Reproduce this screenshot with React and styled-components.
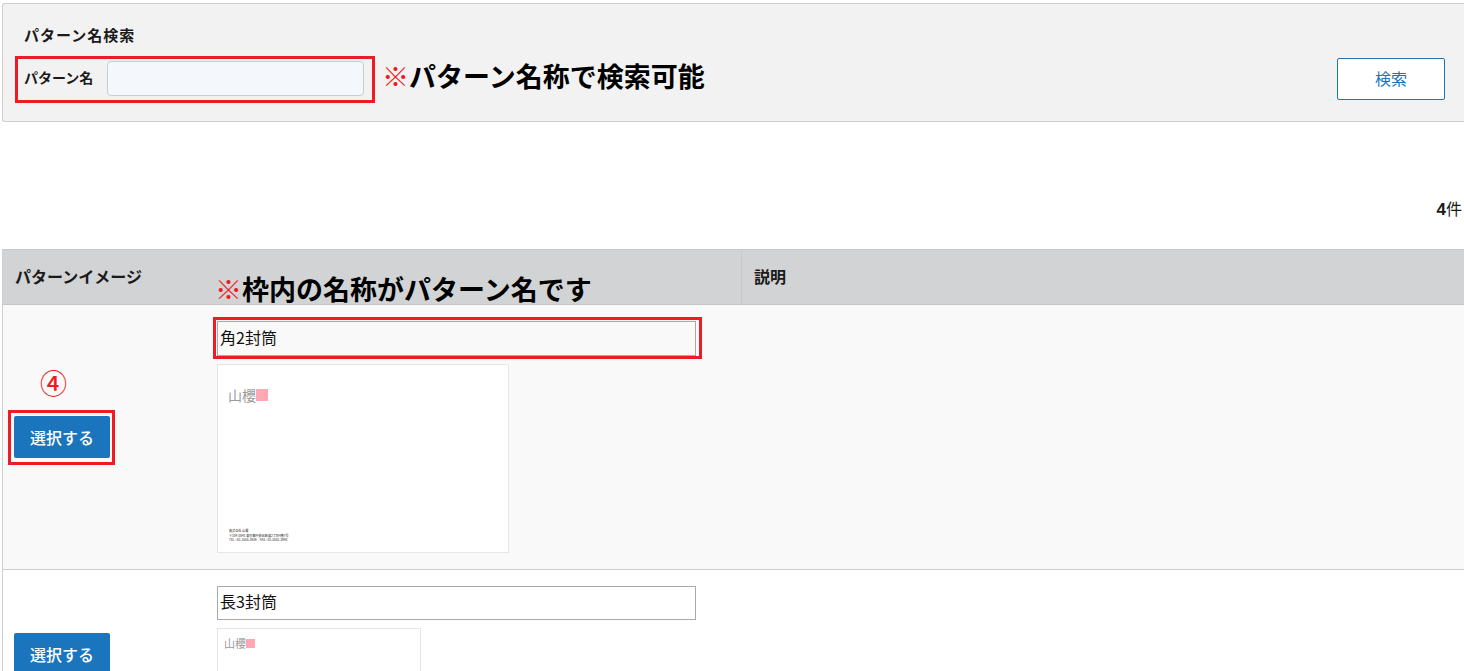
import styled, { createGlobalStyle } from "styled-components";

const GlobalStyle = createGlobalStyle`
  html, body {
    margin: 0;
    padding: 0;
    overflow: hidden;
    background: #fff;
  }

  body {
    font-family: "Noto Sans CJK JP", "Liberation Sans", sans-serif;
    color: #1a1a1a;
  }
`;

const Page = styled.div`
  box-sizing: border-box;
  width: 1464px;
  height: 671px;
  padding: 3px 0 0 2px;
  overflow: hidden;
`;

const SearchPanel = styled.section`
  position: relative;
  box-sizing: border-box;
  height: 119px;
  padding: 20px 19px 0 21px;
  background: #f2f2f2;
  border: 1px solid #cfcfcf;
  border-right: none;
  border-radius: 3px 0 0 3px;
`;

const PanelTitle = styled.h2`
  margin: 0;
  font-size: 15px;
  line-height: 22px;
  font-weight: 700;
  letter-spacing: 1px;
`;

const SearchRow = styled.div`
  display: flex;
  align-items: center;
  margin-top: 15px;
  height: 35px;
`;

const FieldLabel = styled.label`
  width: 83px;
  margin-bottom: 3px;
  font-size: 14px;
  font-weight: 700;
`;

const SearchInput = styled.input`
  box-sizing: border-box;
  width: 257px;
  height: 35px;
  background: #f4f8fc;
  border: 1px solid #c8cdd2;
  border-radius: 4px;
  outline: none;
`;

const SearchButton = styled.button`
  box-sizing: border-box;
  width: 108px;
  height: 42px;
  margin-left: auto;
  padding: 0 0 2px;
  background: #fff;
  border: 1px solid #1b75bc;
  border-radius: 2px;
  color: #1b75bc;
  font-family: inherit;
  font-size: 16px;
`;

const RedFrame = styled.span`
  position: absolute;
  box-sizing: border-box;
  top: ${(p) => p.$top}px;
  left: ${(p) => p.$left}px;
  width: ${(p) => p.$width}px;
  height: ${(p) => p.$height}px;
  border: 3px solid #ed1c24;
  pointer-events: none;
`;

const Note = styled.p`
  position: absolute;
  top: ${(p) => p.$top}px;
  left: ${(p) => p.$left}px;
  margin: 0;
  font-size: 27px;
  line-height: 36px;
  font-weight: 700;
  color: #000;
  white-space: nowrap;

  span {
    color: #ed1c24;
    font-weight: 400;
  }
`;

const Count = styled.div`
  margin: 75px 2px 0 0;
  height: 22px;
  text-align: right;
  font-size: 16px;
  line-height: 22px;

  b {
    font-family: "Liberation Sans", sans-serif;
    font-size: 17px;
  }
`;

const Table = styled.div`
  position: relative;
  margin-top: 30px;
  border-left: 1px solid #cfcfcf;
`;

const HeaderRow = styled.div`
  display: grid;
  grid-template-columns: 738px 1fr;
  height: 56px;
  background: #d1d3d4;
  border-top: 1px solid #c4c6c8;
  box-sizing: border-box;
  border-bottom: 1px solid #c4c6c8;
`;

const HeaderCell = styled.div`
  padding: 15px 12px 0;
  font-size: 16px;
  line-height: 22px;
  font-weight: 700;
  box-sizing: border-box;
  border-left: ${(p) => (p.$divided ? "1px solid #c6c8ca" : "none")};
`;

const Row = styled.div`
  display: grid;
  grid-template-columns: 214px 1fr;
  box-sizing: border-box;
  padding: 16px 0;
  background: ${(p) => (p.$shaded ? "#f9f9f9" : "#fff")};
  border-bottom: 1px solid #cfcfcf;
`;

const ActionCell = styled.div`
  position: relative;
  display: flex;
  align-items: center;
  padding-left: 11px;
`;

const SelectButton = styled.button`
  width: 96px;
  height: 42px;
  padding: 0;
  background: #1b75bc;
  border: none;
  border-radius: 2px;
  color: #fff;
  font-family: inherit;
  font-size: 16px;
  font-weight: 500;
`;

const StepMark = styled.span`
  position: absolute;
  top: 46px;
  left: 37px;
  color: #ed1c24;
  font-size: 27px;
  font-weight: 500;
  line-height: 32px;
`;

const PatternCell = styled.div`
  display: flex;
  flex-direction: column;
  align-items: flex-start;
  gap: 8px;
`;

const NameWrap = styled.div`
  position: relative;
`;

const NameInput = styled.input`
  display: block;
  box-sizing: border-box;
  width: 479px;
  height: ${(p) => p.$h}px;
  padding: 0 2px 4px;
  background: transparent;
  border: 1px solid #a9a9a9;
  outline: none;
  color: #111;
  font-family: "Noto Sans CJK JP", "Liberation Sans", sans-serif;
  font-size: 16px;
`;

const Thumb = styled.div`
  position: relative;
  box-sizing: border-box;
  width: ${(p) => p.$w}px;
  height: ${(p) => p.$h}px;
  padding: ${(p) => p.$pad};
  background: #fff;
  border: 1px solid #e6e6e6;
`;

const Logo = styled.div`
  display: flex;
  align-items: center;
  color: #9a9a9a;
  font-size: ${(p) => p.$size}px;
  line-height: ${(p) => p.$size + 2}px;

  i {
    display: block;
    width: ${(p) => p.$size - 2}px;
    height: ${(p) => p.$size - 2}px;
    background: #ffa8b4;
  }
`;

const Address = styled.div`
  position: absolute;
  left: 11px;
  bottom: 9px;
  font-size: 3.1px;
  line-height: 4.7px;
  font-weight: 500;
  color: #444;
  white-space: nowrap;
`;

export default function App() {
  return (
    <>
      <GlobalStyle />
      <Page>
        <SearchPanel>
          <PanelTitle>パターン名検索</PanelTitle>
          <SearchRow>
            <FieldLabel>パターン名</FieldLabel>
            <SearchInput />
            <SearchButton>検索</SearchButton>
          </SearchRow>
          <RedFrame $top={52} $left={12} $width={360} $height={47} />
          <Note $top={54} $left={379}>
            <span>※</span>パターン名称で検索可能
          </Note>
        </SearchPanel>

        <Count>
          <b>4</b>件
        </Count>

        <Table>
          <HeaderRow>
            <HeaderCell>パターンイメージ</HeaderCell>
            <HeaderCell $divided>説明</HeaderCell>
          </HeaderRow>
          <Note $top={22} $left={212}>
            <span>※</span>枠内の名称がパターン名です
          </Note>

          <Row $shaded>
            <ActionCell>
              <StepMark>④</StepMark>
              <SelectButton>選択する</SelectButton>
              <RedFrame $top={89} $left={5} $width={107} $height={55} />
            </ActionCell>
            <PatternCell>
              <NameWrap>
                <NameInput $h={35} readOnly value="角2封筒" />
                <RedFrame $top={-4} $left={-4} $width={489} $height={42} />
              </NameWrap>
              <Thumb $w={292} $h={189} $pad="22px 10px">
                <Logo $size={14}>
                  山櫻<i />
                </Logo>
                <Address>
                  株式会社 山櫻
                  <br />
                  〒104-0041 東京都中央区新富2丁目4番7号
                  <br />
                  TEL : 03-3555-3939　FAX : 03-3555-3940
                </Address>
              </Thumb>
            </PatternCell>
          </Row>

          <Row>
            <ActionCell>
              <SelectButton>選択する</SelectButton>
            </ActionCell>
            <PatternCell>
              <NameInput $h={34} readOnly value="長3封筒" />
              <Thumb $w={204} $h={94} $pad="8px 6px">
                <Logo $size={11}>
                  山櫻<i />
                </Logo>
              </Thumb>
            </PatternCell>
          </Row>
        </Table>
      </Page>
    </>
  );
}
